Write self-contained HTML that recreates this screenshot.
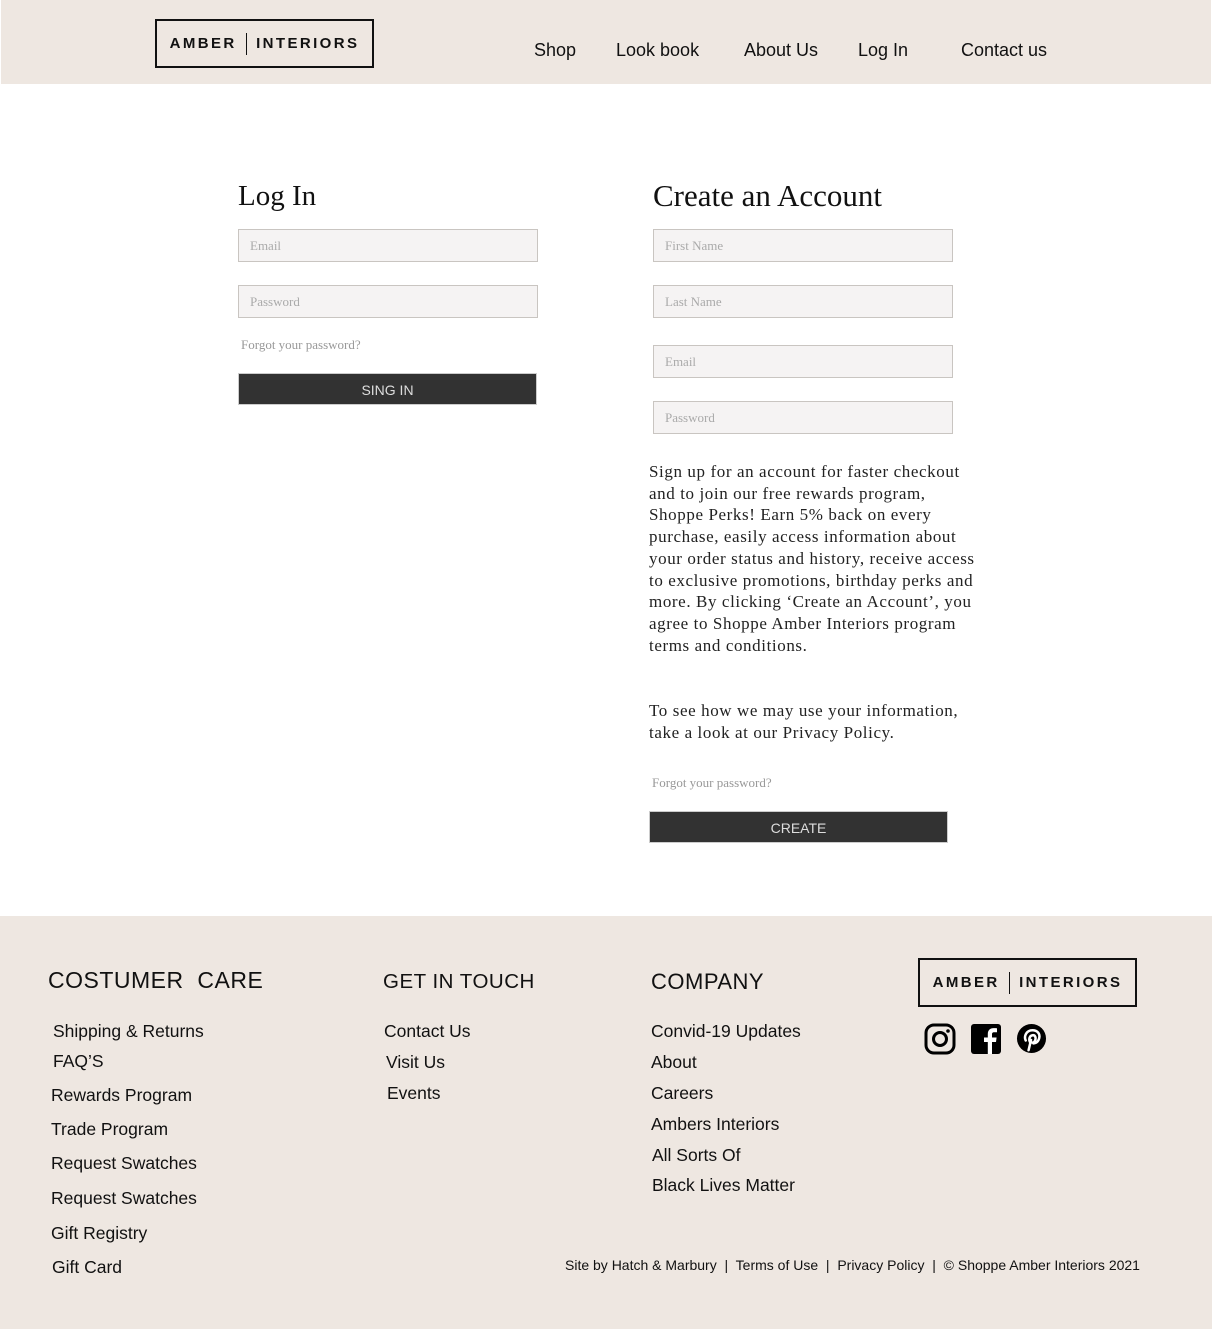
<!DOCTYPE html>
<html><head><meta charset="utf-8">
<style>
*{margin:0;padding:0;box-sizing:border-box}
body{width:1212px;height:1329px;background:#fff;position:relative;font-family:"Liberation Sans",sans-serif;color:#111;overflow:hidden}
.abs{position:absolute}
.hdr{left:1px;top:0;width:1210px;height:84px;background:#eee7e1}
.logo{border:2px solid #111;display:flex;align-items:center;justify-content:center;font-weight:bold;letter-spacing:2.4px;font-size:15px;color:#111}
.logo span.bar{display:inline-block;width:1.5px;height:22px;background:#111;margin:0 9px}
.nav{font-size:18px;top:40px}
h1{font-family:"Liberation Serif",serif;font-weight:normal;font-size:31px;position:absolute}
.inp{position:absolute;width:300px;height:33px;background:#f5f3f3;border:1px solid #c9c5c1;font-family:"Liberation Serif",serif;font-size:13px;color:#aaa;padding:8px 0 0 11px}
.btn{position:absolute;width:299px;height:32px;background:#323232;color:#ddd;font-size:14px;text-align:center;line-height:32px;border:1px solid #ccc}
.small{font-family:"Liberation Serif",serif;font-size:13px;color:#999;position:absolute}
.para{font-family:"Liberation Serif",serif;font-size:17px;letter-spacing:.6px;line-height:21.7px;color:#222;position:absolute;width:330px}
.ftr{left:0;top:916px;width:1212px;height:413px;background:#eee7e1}
.fh{position:absolute;letter-spacing:.5px}
.fl{position:absolute;font-size:17.5px}
</style></head><body>
<div class="abs hdr"></div>
<div class="abs logo" style="left:155px;top:19px;width:219px;height:49px">AMBER<span class="bar"></span>INTERIORS</div>
<div class="abs nav" style="left:534px">Shop</div>
<div class="abs nav" style="left:616px">Look book</div>
<div class="abs nav" style="left:744px">About Us</div>
<div class="abs nav" style="left:858px">Log In</div>
<div class="abs nav" style="left:961px">Contact us</div>

<h1 style="left:238px;top:180px;font-size:29px">Log In</h1>
<div class="inp" style="left:238px;top:229px">Email</div>
<div class="inp" style="left:238px;top:285px">Password</div>
<div class="small" style="left:241px;top:337px">Forgot your password?</div>
<div class="btn" style="left:238px;top:373px">SING IN</div>

<h1 style="left:653px;top:178px">Create an Account</h1>
<div class="inp" style="left:653px;top:229px">First Name</div>
<div class="inp" style="left:653px;top:285px">Last Name</div>
<div class="inp" style="left:653px;top:345px">Email</div>
<div class="inp" style="left:653px;top:401px">Password</div>
<div class="para" style="left:649px;top:461px">Sign up for an account for faster checkout and to join our free rewards program, Shoppe Perks! Earn 5% back on every purchase, easily access information about your order status and history, receive access to exclusive promotions, birthday perks and more. By clicking ‘Create an Account’, you agree to Shoppe Amber Interiors program terms and conditions.</div>
<div class="para" style="left:649px;top:700px">To see how we may use your information, take a look at our Privacy Policy.</div>
<div class="small" style="left:652px;top:775px">Forgot your password?</div>
<div class="btn" style="left:649px;top:811px">CREATE</div>

<div class="abs ftr"></div>
<div class="fh" style="left:48px;top:967px;font-size:23px">COSTUMER&nbsp; CARE</div>
<div class="fh" style="left:383px;top:970px;font-size:20.5px">GET IN TOUCH</div>
<div class="fh" style="left:651px;top:969px;font-size:22px">COMPANY</div>
<div class="fl" style="left:53px;top:1021px">Shipping &amp; Returns</div>
<div class="fl" style="left:53px;top:1051px">FAQ’S</div>
<div class="fl" style="left:51px;top:1085px">Rewards Program</div>
<div class="fl" style="left:51px;top:1119px">Trade Program</div>
<div class="fl" style="left:51px;top:1153px">Request Swatches</div>
<div class="fl" style="left:51px;top:1188px">Request Swatches</div>
<div class="fl" style="left:51px;top:1223px">Gift Registry</div>
<div class="fl" style="left:52px;top:1257px">Gift Card</div>
<div class="fl" style="left:384px;top:1021px">Contact Us</div>
<div class="fl" style="left:386px;top:1052px">Visit Us</div>
<div class="fl" style="left:387px;top:1083px">Events</div>
<div class="fl" style="left:651px;top:1021px">Convid-19 Updates</div>
<div class="fl" style="left:651px;top:1052px">About</div>
<div class="fl" style="left:651px;top:1083px">Careers</div>
<div class="fl" style="left:651px;top:1114px">Ambers Interiors</div>
<div class="fl" style="left:652px;top:1145px">All Sorts Of</div>
<div class="fl" style="left:652px;top:1175px">Black Lives Matter</div>
<div class="abs logo" style="left:918px;top:958px;width:219px;height:49px">AMBER<span class="bar"></span>INTERIORS</div>
<svg class="abs" style="left:924px;top:1023px" width="32" height="32" viewBox="0 0 32 32"><rect x="2" y="2" width="28" height="28" rx="8" fill="none" stroke="#000" stroke-width="3"/><circle cx="16" cy="16" r="6.5" fill="none" stroke="#000" stroke-width="3"/><circle cx="24" cy="8" r="1.8" fill="#000"/></svg>
<svg class="abs" style="left:971px;top:1024px" width="30" height="30" viewBox="0 0 30 30"><rect x="0" y="0" width="30" height="30" rx="3" fill="#000"/><path d="M21 30V18h4l.6-4.5H21v-3c0-1.3.4-2.2 2.2-2.2H26V4.3c-.5-.1-1.9-.2-3.5-.2-3.4 0-5.7 2.1-5.7 5.9v3.5h-3.8V18h3.8v12z" fill="#fff"/></svg>
<svg class="abs" style="left:1016px;top:1023px" width="31" height="31" viewBox="0 0 32 32"><circle cx="16" cy="16" r="15" fill="#000"/><path d="M13 28l2.5-10.5M14.3 19.5c-1.2-2.5-.5-6.5 2.8-6.9 2.8-.3 3.6 2.5 2.8 5-.6 2-2.3 3.3-3.8 2.3M10 18c-2-4 .5-10.5 7-10.5 5 0 8 3.5 7 8-.8 3.6-3.4 5.7-6 5.5" fill="none" stroke="#fff" stroke-width="2.6" stroke-linecap="round"/></svg>
<div class="abs" style="left:565px;top:1257px;font-size:14px">Site by Hatch &amp; Marbury&nbsp; |&nbsp; Terms of Use&nbsp; |&nbsp; Privacy Policy&nbsp; |&nbsp; © Shoppe Amber Interiors 2021</div>
</body></html>
